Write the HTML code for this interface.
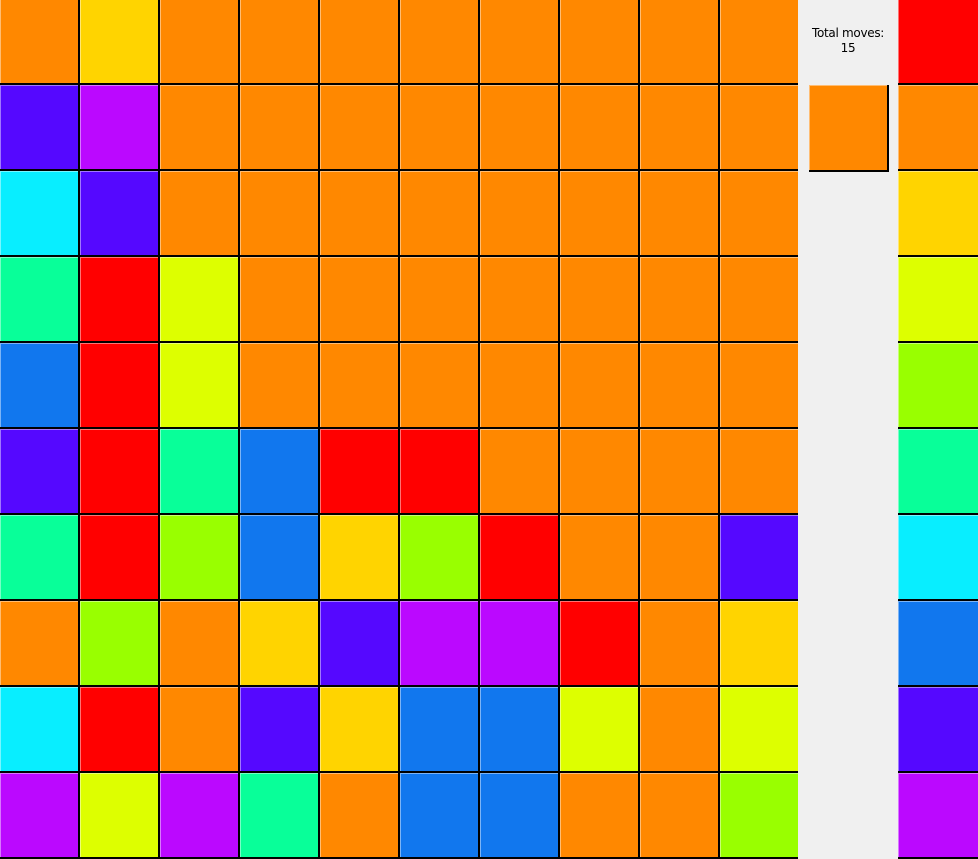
<!DOCTYPE html>
<html><head><meta charset="utf-8">
<style>
html,body{margin:0;padding:0;background:#f0f0f0;width:978px;height:859px;overflow:hidden;position:relative;}
.c{position:absolute;box-sizing:border-box;width:80px;height:86px;border-right:2px solid #000;border-bottom:2px solid #000;box-shadow:inset 1px 1px 0 rgba(255,255,255,0.45);}
#side{position:absolute;left:798px;top:0;width:100px;height:859px;background:#f0f0f0;}
#txt{position:absolute;left:0;width:100px;top:26px;text-align:center;font:12px/15px "DejaVu Sans","Liberation Sans",sans-serif;color:#000;letter-spacing:-0.3px;}
</style></head><body>
<div id="g"></div>
<div id="side"><div id="txt">Total moves:<br>15</div>
<div class="c" style="left:11px;top:85px;width:80px;height:87px;background:#ff8800"></div></div>
<script>
var col={O:"#ff8800",Y:"#ffd400",P:"#5508ff",V:"#bb08ff",C:"#08eeff",G:"#08ff99",R:"#ff0000",B:"#1177ee",L:"#ddff00",M:"#99ff00"};
var rows=["OYOOOOOOOO","PVOOOOOOOO","CPOOOOOOOO","GRLOOOOOOO","BRLOOOOOOO","PRGBRROOOO","GRMBYMROOP","OMOYPVVROY","CROPYBBLOL","VLVGOBBOOM"];
var pal="ROYLMGCBPV";
var h="";
for(var r=0;r<10;r++){for(var c=0;c<10;c++){h+='<div class="c" style="left:'+(c*80)+'px;top:'+(r*86-1)+'px;background:'+col[rows[r][c]]+'"></div>';}
h+='<div class="c" style="left:898px;width:82px;top:'+(r*86-1)+'px;background:'+col[pal[r]]+'"></div>';}
document.getElementById("g").innerHTML=h;
</script>
</body></html>
